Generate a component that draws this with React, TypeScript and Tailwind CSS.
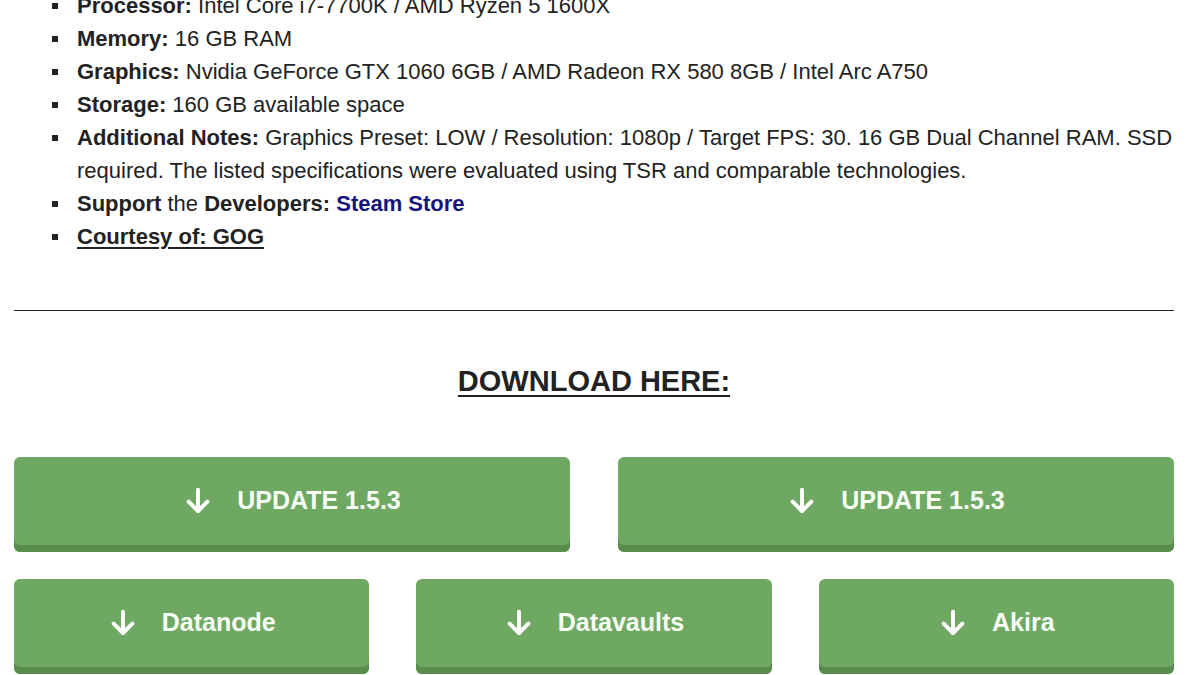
import React from "react";

const Arrow = () => (
  <svg width="30" height="30" viewBox="0 0 24 24" fill="none" stroke="white" strokeWidth="3.2" strokeLinecap="round" strokeLinejoin="round">
    <path d="M12 3v17" />
    <path d="M4.5 12.5l7.5 7.5 7.5-7.5" />
  </svg>
);

const Btn = ({ label }: { label: string }) => (
  <a className="flex h-[95px] items-center justify-center gap-[24px] rounded-[6px] bg-[#6fa862] pb-[7px] text-[25px] font-bold text-[#f7fff5] shadow-[inset_0_-7px_0_#5a8c4e] no-underline">
    <Arrow />
    <span>{label}</span>
  </a>
);

const Item = ({ children }: { children: React.ReactNode }) => (
  <li className="flex">
    <span className="mt-[14px] ml-[38px] mr-[19px] h-[6px] w-[6px] shrink-0 bg-[#222]" />
    <span>{children}</span>
  </li>
);

export default function App() {
  return (
    <div className="h-[675px] overflow-hidden bg-white pl-[14px] pr-[26px] text-[#222]" style={{ fontFamily: '"Liberation Sans", Arial, sans-serif' }}>
      <ul className="mt-[-11px] text-[22px] leading-[33px]">
        <Item><b>Processor:</b> Intel Core i7-7700K / AMD Ryzen 5 1600X</Item>
        <Item><b>Memory:</b> 16 GB RAM</Item>
        <Item><b>Graphics:</b> Nvidia GeForce GTX 1060 6GB / AMD Radeon RX 580 8GB / Intel Arc A750</Item>
        <Item><b>Storage:</b> 160 GB available space</Item>
        <Item><b>Additional Notes:</b> Graphics Preset: LOW / Resolution: 1080p / Target FPS: 30. 16 GB Dual Channel RAM. SSD required. The listed specifications were evaluated using TSR and comparable technologies.</Item>
        <Item><b>Support</b> the <b>Developers:</b> <a className="font-bold text-[#141480]">Steam Store</a></Item>
        <Item><b className="underline underline-offset-[3px]">Courtesy of: GOG</b></Item>
      </ul>
      <hr className="mt-[57px] border-0 border-t-[1.5px] border-[#222]" />
      <h2 className="mt-[54px] text-center text-[29px] font-bold leading-[32px] underline underline-offset-[4px]">DOWNLOAD HERE:</h2>
      <div className="mt-[60px] grid grid-cols-2 gap-x-[48px]">
        <Btn label="UPDATE 1.5.3" />
        <Btn label="UPDATE 1.5.3" />
      </div>
      <div className="mt-[27px] grid grid-cols-3 gap-x-[47px]">
        <Btn label="Datanode" />
        <Btn label="Datavaults" />
        <Btn label="Akira" />
      </div>
    </div>
  );
}
